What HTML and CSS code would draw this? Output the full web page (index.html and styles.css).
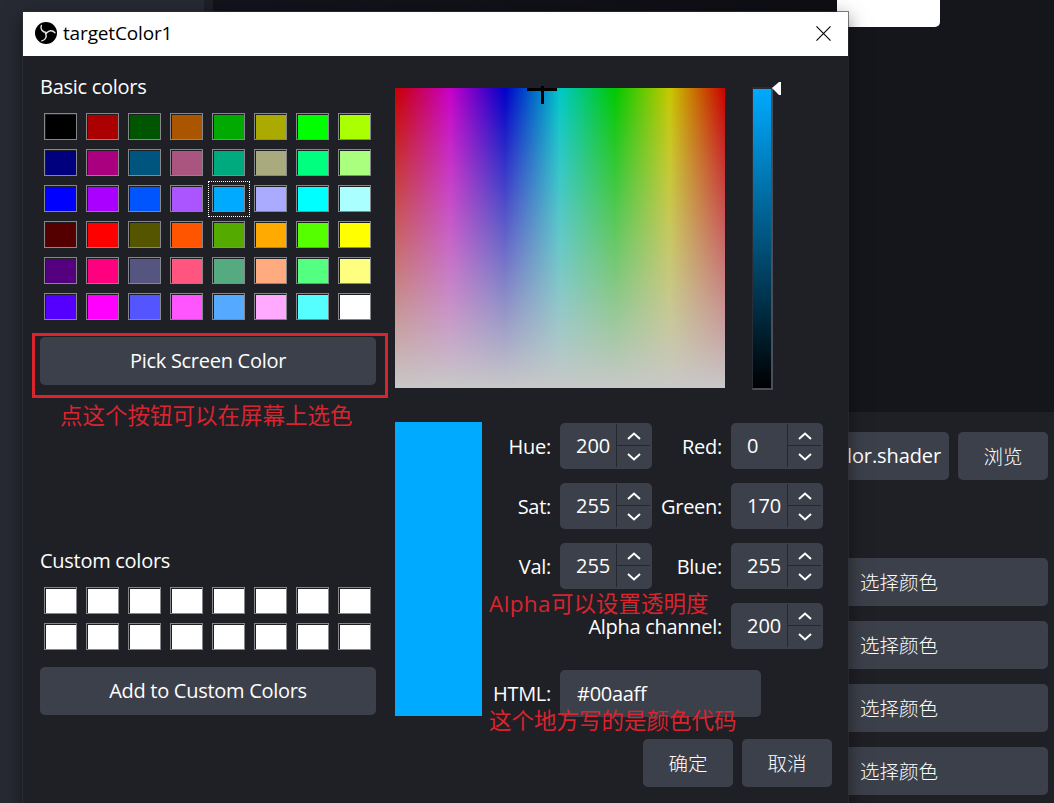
FILE: index.html
```
<!DOCTYPE html>
<html lang="zh-CN">
<head>
<meta charset="utf-8">
<title>targetColor1</title>
<link rel="stylesheet" href="styles.css">
</head>
<body>
<div class="desktop">
  <div class="backdrop">
    <div class="side-panel"></div>
    <div class="side-gap"></div>
    <div class="main-area">
      <div class="preview-area"><div class="toast"></div></div>
      <div class="props">
        <div class="props-row"><div class="field path">lor.shader</div><div class="btn browse">浏览</div></div>
        <div class="btn choose">选择颜色</div>
        <div class="btn choose">选择颜色</div>
        <div class="btn choose">选择颜色</div>
        <div class="btn choose">选择颜色</div>
      </div>
    </div>
  </div>

  <div class="dialog">
    <div class="titlebar">
      <svg class="logo" viewBox="0 0 22 22">
        <circle cx="11" cy="11" r="11" fill="#000"/>
        <g fill="none" stroke="#e4e4e4" stroke-width="1.4" stroke-linecap="round">
          <path d="M11.200 10.500C7.500 10.200 5 7.200 6.300 3.400"/>
          <path d="M11.200 10.500C7.500 10.200 5 7.200 6.300 3.400" transform="rotate(120 11 11)"/>
          <path d="M11.200 10.500C7.500 10.200 5 7.200 6.300 3.400" transform="rotate(240 11 11)"/>
        </g>
      </svg>
      <span class="title">targetColor1</span>
      <svg class="close" viewBox="0 0 16 16"><path d="M.5.5l15 15M15.500.5l-15 15" stroke="#000" stroke-width="1.200" fill="none"/></svg>
    </div>
    <div class="content">
      <div class="left">
        <div class="label">Basic colors</div>
        <div class="swatches" id="basic"></div>
        <div class="btn wide pick">Pick Screen Color<div class="mark-box"></div></div>
        <div class="label custom-label">Custom colors</div>
        <div class="swatches" id="custom"></div>
        <div class="btn wide add">Add to Custom Colors</div>
      </div>
      <div class="right">
        <div class="picker">
          <div class="spectrum"><svg class="cross" viewBox="0 0 30 18"><path d="M0 2h30v3H0zM14 0h3v18h-3z"/></svg></div>
          <div class="value-bar"><svg class="arrow" viewBox="0 0 9 13"><path d="M0 6L7 0H9V13H7Z" fill="#fff"/></svg></div>
        </div>
        <div class="editor">
          <div class="current"></div>
          <div class="form" id="form">
            <span class="name">Hue:</span><div class="spin">200</div>
            <span class="name">Red:</span><div class="spin">0</div>
            <span class="name">Sat:</span><div class="spin">255</div>
            <span class="name">Green:</span><div class="spin">170</div>
            <span class="name">Val:</span><div class="spin">255</div>
            <span class="name">Blue:</span><div class="spin">255</div>
            <span class="name alpha">Alpha channel:</span><div class="spin">200</div>
            <span class="name html-name">HTML:</span><div class="field html">#00aaff</div>
          </div>
        </div>
        <div class="footer"><div class="btn ok">确定</div><div class="btn ok">取消</div></div>
      </div>
    </div>
  </div>

  <div class="note note-pick">点这个按钮可以在屏幕上选色</div>
  <div class="note note-alpha"><span class="latin">Alpha</span>可以设置透明度</div>
  <div class="note note-html">这个地方写的是颜色代码</div>
</div>
<script src="app.js"></script>
</body>
</html>
```
FILE: app.js
```
const basic = [
  '#000000','#aa0000','#005500','#aa5500','#00aa00','#aaaa00','#00ff00','#aaff00',
  '#00007f','#aa007f','#00557f','#aa557f','#00aa7f','#aaaa7f','#00ff7f','#aaff7f',
  '#0000ff','#aa00ff','#0055ff','#aa55ff','#00aaff','#aaaaff','#00ffff','#aaffff',
  '#550000','#ff0000','#555500','#ff5500','#55aa00','#ffaa00','#55ff00','#ffff00',
  '#55007f','#ff007f','#55557f','#ff557f','#55aa7f','#ffaa7f','#55ff7f','#ffff7f',
  '#5500ff','#ff00ff','#5555ff','#ff55ff','#55aaff','#ffaaff','#55ffff','#ffffff'
];
const fill = (id, colors, selected) => {
  document.getElementById(id).innerHTML = colors.map((c, i) =>
    `<div class="cell${i === selected ? ' selected' : ''}"><div class="swatch" style="background-color:${c}"></div></div>`
  ).join('');
};
fill('basic', basic, 20);
fill('custom', Array(16).fill('#ffffff'), -1);

document.querySelectorAll('.spin').forEach(el => {
  el.innerHTML = `<span class="num">${el.textContent}</span><div class="steps">
    <svg viewBox="0 0 14 8"><path d="M1 7L7 1.500L13 7"/></svg>
    <svg viewBox="0 0 14 8"><path d="M1 1L7 6.500L13 1"/></svg></div>`;
});
```
FILE: styles.css
```
* { box-sizing: border-box; }
body {
  margin: 0;
  font: 20px/28px "Open Sans", "Noto Sans CJK SC", sans-serif;
  color: #fefefe;
}
.desktop { position: relative; width: 1054px; height: 803px; overflow: hidden; background: #15161b; }
.backdrop { display: flex; height: 803px; }
.side-panel { width: 204px; background: #272a33; }
.side-gap { width: 9px; background: #1f2026; }
.main-area { flex: 1; display: flex; flex-direction: column; }
.preview-area { height: 412px; padding-left: 624px; background: linear-gradient(90deg, #13131d 0, #0e0e14 624px, #15161b 624px); }
.toast { width: 103px; height: 27px; background: #fff; border-radius: 0 0 5px 5px; }
.props { flex: 1; background: #1f2026; padding: 20px 6px 0 500px; display: flex; flex-direction: column; gap: 15px; }
.props-row { display: flex; gap: 9px; margin-bottom: 63px; }
.btn, .field { height: 48px; background: #3c404b; border-radius: 5px; display: flex; align-items: center; justify-content: center; }
.path { flex: 1; justify-content: flex-end; padding-right: 8px; letter-spacing: -0.1px; }
.browse { width: 90px; font-size: 19.500px; font-weight: 300; padding-top: 2px; }
.choose { justify-content: flex-start; padding-left: 147px; font-size: 19.500px; font-weight: 300; padding-top: 2px; }

.dialog {
  position: absolute; left: 23px; top: 12px; width: 825px; height: 800px;
  background: #1f2026; box-shadow: 0 0 0 1px rgba(50,50,54,.6), 0 5px 18px rgba(0,0,0,.5);
}
.titlebar { height: 44px; background: #fff; color: #000; display: flex; align-items: center; padding: 0 17px 2px 12px; }
.logo { width: 22px; height: 22px; margin-right: 6px; }
.title { font-size: 19px; letter-spacing: -0.15px; }
.close { width: 15px; height: 15px; margin-left: auto; }
.content { display: flex; padding: 16px 0 0 17px; }
.left { width: 336px; margin-right: 19px; letter-spacing: -0.28px; }
.label { height: 30px; line-height: 30px; }
.swatches { display: grid; grid-template-columns: repeat(8, 42px); grid-auto-rows: 36px; margin-top: 7px; }
.cell { padding: 4px; }
.swatch { width: 33px; height: 27px; border: 1px solid #85878b; box-shadow: inset 1px 1px #1d1e22; }
.selected { outline: 1px dotted #fff; outline-offset: -1px; }
.wide { width: 336px; position: relative; }
.pick { margin-top: 12px; }
.mark-box { position: absolute; left: -8px; top: -4px; width: 356px; height: 65px; border: 3px solid #d9242e; }
.custom-label { margin-top: 161px; }
.add { margin-top: 12px; }

.right { width: 437px; padding-top: 15px; }
.picker { display: flex; gap: 27px; height: 302px; }
.spectrum {
  position: relative; width: 330px; height: 300px; margin-top: 1px;
  background: linear-gradient(rgba(200,200,200,0), #c8c8c8),
    linear-gradient(90deg, #c80000, #c800c8, #0000c8, #00c8c8, #00c800, #c8c800, #c80000);
}
.cross { position: absolute; left: 132px; top: -2px; width: 30px; height: 18px; }
.value-bar { position: relative; width: 21px; height: 303px; border: solid #4b4e5a; border-width: 2px 2px 2px 1px; border-top-color: #292c35; border-left-color: #292c35; background: linear-gradient(#00aaff, #000) padding-box; }
.arrow { position: absolute; left: 19px; top: -7px; width: 9px; height: 13px; }
.editor { display: flex; margin-top: 33px; height: 295px; }
.current { width: 87px; height: 294px; background: #00aaff; margin-right: 9px; }
.form { display: grid; grid-template-columns: 60px 92px 61px 92px; grid-template-rows: repeat(4, 46px) 48px; column-gap: 9px; row-gap: 14px; padding-top: 1px; align-items: center; }
.name { text-align: right; white-space: nowrap; padding-top: 2px; justify-self: end; letter-spacing: -0.28px; }
.alpha { grid-column: 1 / 4; }
.spin { height: 46px; background: #3c404b; border-radius: 5px; display: flex; }
.num { width: 56px; padding-left: 16px; line-height: 46px; }
.steps { flex: 1; margin: 1px 2px 2px 0; border-left: 1px solid #25272f; display: grid; grid-template-rows: 23px 20px; justify-items: center; align-items: center; background: linear-gradient(#25272f, #25272f) 0 21px / 100% 1px no-repeat; }
.steps svg { width: 14px; height: 8px; fill: none; stroke: #fff; stroke-width: 2; }
.html-name { line-height: 46px; padding: 0; margin-top: 8px; align-self: start; }
.html { grid-column: 2 / 5; width: 201px; height: 47px; margin-top: 7px; align-self: start; justify-content: flex-start; padding-left: 17px; letter-spacing: -0.28px; }
.footer { display: flex; justify-content: flex-end; gap: 9px; margin-top: 22px; }
.ok { width: 90px; font-size: 19.500px; font-weight: 300; padding-top: 2px; }

.note { position: absolute; color: #d9242e; font: 22.500px/30px "Noto Sans CJK SC", sans-serif; white-space: nowrap; }
.latin { font-family: "Open Sans", sans-serif; letter-spacing: 0.4px; }
.note-pick { left: 60px; top: 399px; }
.note-alpha { left: 489px; top: 587px; }
.note-html { left: 489px; top: 704px; }
```
